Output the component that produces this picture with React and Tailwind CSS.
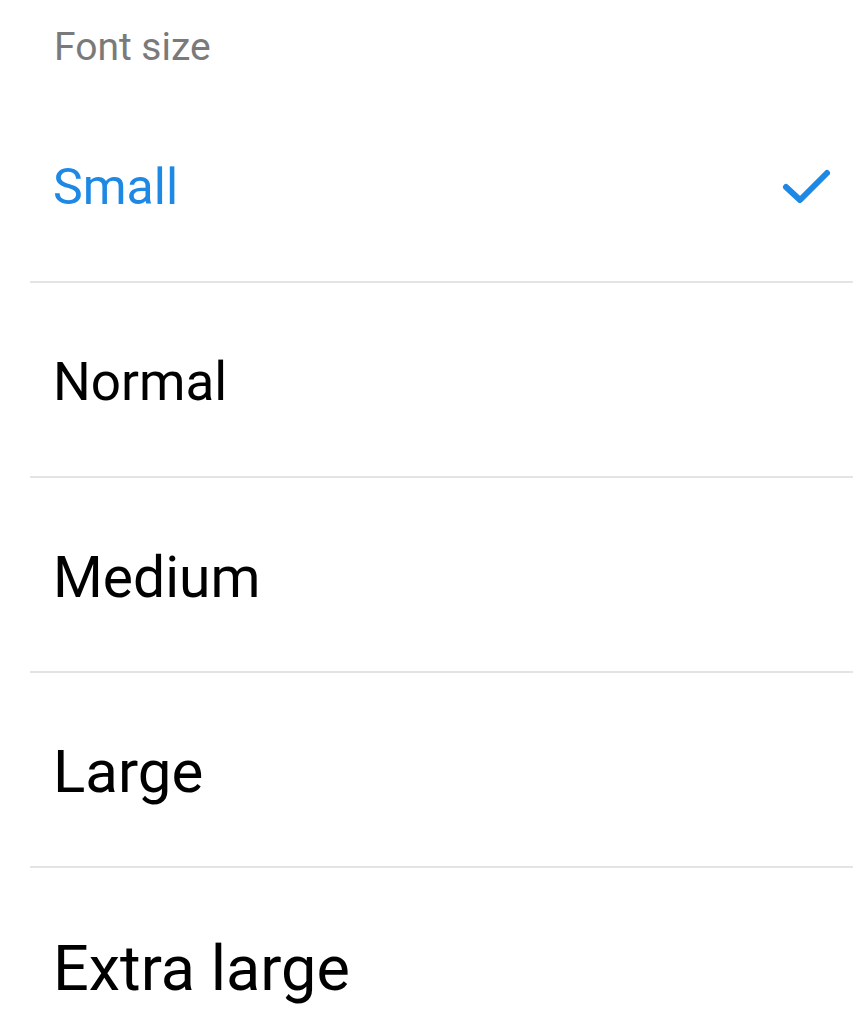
import React from "react";

const options = [
  { label: "Small", size: "text-[50px]", selected: true },
  { label: "Normal", size: "text-[53px]" },
  { label: "Medium", size: "text-[57px]" },
  { label: "Large", size: "text-[60px]" },
  { label: "Extra large", size: "text-[63px]" },
];

const CheckIcon = () => (
  <svg width="52" height="44" viewBox="0 0 52 44" fill="none" className="mt-[4px]">
    <path
      d="M5 20 L19 33 L46 6"
      stroke="#1e88e5"
      strokeWidth="6"
      strokeLinecap="round"
      strokeLinejoin="round"
    />
  </svg>
);

const App = () => {
  return (
    <div className="min-h-screen bg-white overflow-hidden" style={{ fontFamily: "Roboto, 'Noto Sans', sans-serif" }}>
      <div className="h-[88px] pt-[19px] pl-[54px]">
        <p className="text-[39px] leading-[56px] text-[#7a7a7a]">Font size</p>
      </div>

      <ul>
        {options.map((option, index) => (
          <li
            key={option.label}
            className={`ml-[30px] h-[195px] flex items-center justify-between pl-[23px] pr-[20px] pt-[5px] ${
              index < options.length - 1 ? "border-b-2 border-[#e4e4e4]" : ""
            }`}
          >
            <span
              className={`${option.size} leading-none ${
                option.selected ? "text-[#1e88e5]" : "text-black"
              }`}
            >
              {option.label}
            </span>
            {option.selected && <CheckIcon />}
          </li>
        ))}
      </ul>
    </div>
  );
};

export default App;
